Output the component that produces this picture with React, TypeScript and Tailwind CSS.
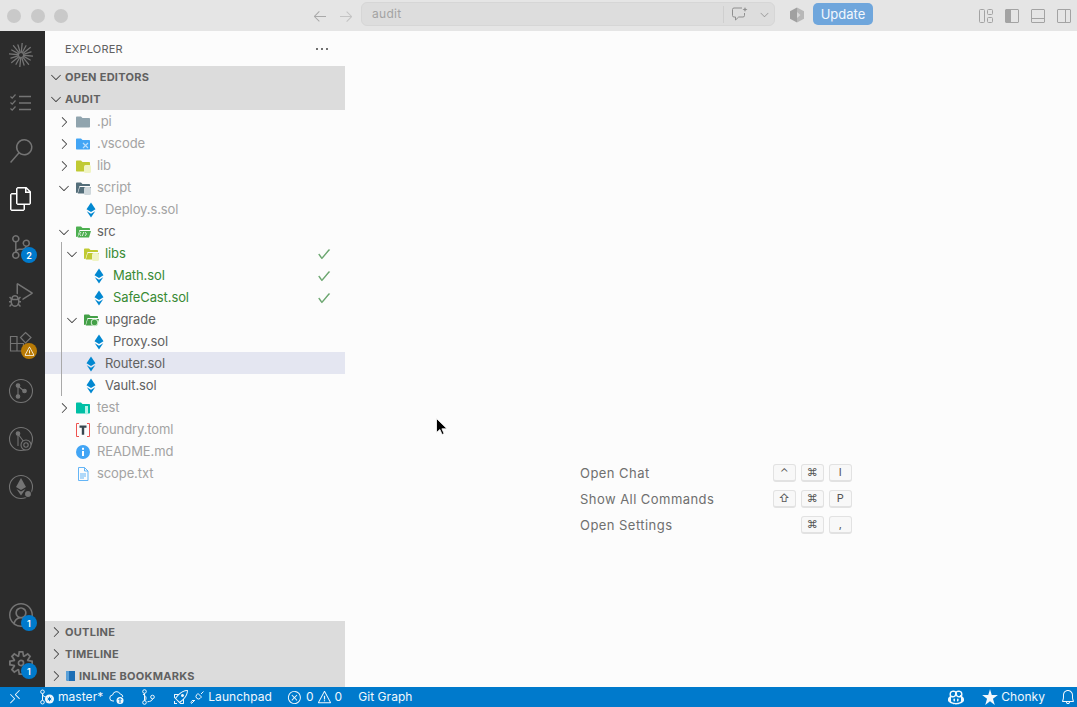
import React from "react";
import {
  VscArrowLeft, VscArrowRight, VscChevronDown, VscChevronRight, VscEllipsis, VscCheck,
  VscSearch, VscFiles, VscSourceControl, VscDebugAlt, VscAccount, VscSettingsGear,
  VscRemote, VscBell, VscError, VscWarning, VscRocket, VscCopilot, VscStarFull,
  VscLayoutSidebarLeft, VscLayoutPanelOff, VscLayoutSidebarRightOff,
} from "react-icons/vsc";

const Badge = ({ children, amber }: { children: React.ReactNode; amber?: boolean }) => (
  <span className={`absolute left-[21px] top-[24px] flex h-4 w-4 items-center justify-center rounded-full text-[9px] font-semibold leading-none text-white ${amber ? "bg-[#b87a06]" : "bg-[#007acc]"}`}>
    {children}
  </span>
);

const RingIcon = ({ children }: { children?: React.ReactNode }) => (
  <svg width="26" height="26" viewBox="0 0 26 26" fill="none" stroke="currentColor" strokeWidth="1.1">
    <circle cx="13" cy="13" r="11.5" />
    {children}
  </svg>
);

const Star = () => (
  <svg width="24" height="24" viewBox="0 0 24 24" stroke="currentColor" strokeWidth="1.3" strokeLinecap="round">
    {Array.from({ length: 16 }).map((_, i) => {
      const a = (i * Math.PI) / 8 + 0.1;
      const r = i % 2 ? 10.5 : 12;
      return <line key={i} x1={12 + 2.5 * Math.cos(a)} y1={12 + 2.5 * Math.sin(a)} x2={12 + r * Math.cos(a)} y2={12 + r * Math.sin(a)} />;
    })}
  </svg>
);

const Checklist = () => (
  <svg width="24" height="24" viewBox="0 0 24 24" fill="none" stroke="currentColor" strokeWidth="1.2">
    <path d="M1.5 5.5l1.7 1.7L6.5 3.5M1.5 11.5l1.7 1.7 3.3-3.7M1.5 17.5l1.7 1.7 3.3-3.7" />
    <path d="M10 5.5h12M10 12h12M10 18.5h12" strokeWidth="1.5" />
  </svg>
);

const Extensions = () => (
  <svg width="24" height="24" viewBox="0 0 24 24" fill="none" stroke="currentColor" strokeWidth="1.2">
    <path d="M1.5 5.5h6.5v7H1.5zM8 12.5h6.5v7.5H8zM1.5 12.5H8V20H1.5zM8 5.5v7" />
    <path d="M16.5 1.5l5.5 5-5.5 5.5L11.5 6.5z" />
  </svg>
);

const activityTop: [React.ReactNode, React.ReactNode?, boolean?, boolean?][] = [
  [<Star />],
  [<Checklist />],
  [<VscSearch size={24} />],
  [<VscFiles size={24} />, undefined, false, true],
  [<VscSourceControl size={24} />, "2"],
  [<VscDebugAlt size={24} />],
  [<Extensions />, <VscWarning size={11} />, true],
  [
    <RingIcon>
      <circle cx="10" cy="7.5" r="1.8" fill="currentColor" />
      <circle cx="10" cy="18.5" r="1.8" fill="currentColor" />
      <circle cx="16.5" cy="13" r="1.8" fill="currentColor" />
      <path d="M10 8v10M10 8l6 5" />
    </RingIcon>,
  ],
  [
    <RingIcon>
      <circle cx="10" cy="7.5" r="1.8" fill="currentColor" />
      <path d="M10 8v12M10 8l6 8" />
      <circle cx="18" cy="19" r="5" fill="#2c2c2c" />
      <circle cx="18" cy="19" r="2.2" />
    </RingIcon>,
  ],
  [
    <RingIcon>
      <path d="M13 4l5 9-5 3-5-3z" fill="currentColor" stroke="none" />
      <path d="M8.5 15l4.5 2.6 4.5-2.6-4.5 6.5z" fill="currentColor" stroke="none" />
      <circle cx="20" cy="20" r="3.5" fill="currentColor" stroke="#2c2c2c" />
    </RingIcon>,
  ],
];

const ActivityItem = ({ icon, badge, amber, active }: { icon: React.ReactNode; badge?: React.ReactNode; amber?: boolean; active?: boolean }) => (
  <div className={`relative flex h-12 w-[45px] items-center justify-center pr-[3px] ${active ? "text-white" : "text-[#747474]"}`}>
    {icon}
    {badge ? <Badge amber={amber}>{badge}</Badge> : null}
  </div>
);

const FOLDER = "M1 3.5C1 3 1.4 2.5 2 2.5h4l1.5 1.5H14c.6 0 1 .4 1 1v7.5c0 .6-.4 1-1 1H2c-.6 0-1-.4-1-1z";
const OPEN = "M1 3.5C1 3 1.4 2.5 2 2.5h4l1.5 1.5H14c.6 0 1 .4 1 1v1H4.5L2.5 13H2c-.6 0-1-.4-1-1z M4.8 7H16l-2 6.5H2.8z";

const Folder = ({ color, open, mark, markColor }: { color: string; open?: boolean; mark?: React.ReactNode; markColor?: string }) => (
  <svg width="16" height="16" viewBox="0 0 16 16">
    <path d={open ? OPEN : FOLDER} fill={color} />
    {markColor ? <rect x="9" y="7" width="7" height="8" rx="1.5" fill={markColor} /> : null}
    {mark}
  </svg>
);

const Sol = () => (
  <svg width="16" height="16" viewBox="0 0 16 16" fill="#0288d1">
    <path d="M8 .5l4.5 6.8L8 10 3.5 7.3z" />
    <path d="M3.8 9.2L8 11.8l4.2-2.6L8 15.5z" />
  </svg>
);

type Row = { name: string; depth: 0 | 1 | 2; icon: React.ReactNode; arrow?: "open" | "closed"; tone?: "dim" | "green" | "normal"; check?: boolean; selected?: boolean };

const depthPad = ["pl-[11px]", "pl-[19px]", "pl-[27px]"];
const tones = { dim: "text-[#a3a3a3]", green: "text-[#388a34]", normal: "text-[#616161]" };

const RowView = ({ r }: { r: Row }) => (
  <div className={`flex h-[22px] items-center pr-[14px] pt-[2px] text-[13px] tracking-[-0.1px] ${depthPad[r.depth]} ${r.selected ? "bg-[#e4e6f1]" : ""} ${tones[r.tone ?? "normal"]}`}>
    <span className="flex w-4 justify-center text-[#424242]">
      {r.arrow === "open" ? <VscChevronDown size={16} /> : r.arrow === "closed" ? <VscChevronRight size={16} /> : null}
    </span>
    <span className="ml-[3px] flex h-4 w-4 items-center justify-center">{r.icon}</span>
    <span className="ml-[6px] flex-1">{r.name}</span>
    {r.check ? <VscCheck size={14} className="text-[#5f9f64] [stroke-width:0.6]" /> : null}
  </div>
);

const top: Row[] = [
  { name: ".pi", depth: 0, arrow: "closed", tone: "dim", icon: <Folder color="#90a4ae" /> },
  { name: ".vscode", depth: 0, arrow: "closed", tone: "dim", icon: <Folder color="#42a5f5" mark={<path d="M8 7l5 5M13 7l-5 5" stroke="#bbdefb" strokeWidth="1.2" />} /> },
  { name: "lib", depth: 0, arrow: "closed", tone: "dim", icon: <Folder color="#c0ca33" markColor="#f0f4c3" /> },
  { name: "script", depth: 0, arrow: "open", tone: "dim", icon: <Folder color="#546e7a" open markColor="#cfd8dc" /> },
  { name: "Deploy.s.sol", depth: 1, tone: "dim", icon: <Sol /> },
  { name: "src", depth: 0, arrow: "open", icon: <Folder color="#4caf50" open mark={<path d="M6 8l-1.5 2L6 12M10 8l1.5 2L10 12M8.7 8l-1.4 4" stroke="#e8f5e9" fill="none" strokeWidth=".9" />} /> },
];
const inner: Row[] = [
  { name: "libs", depth: 1, arrow: "open", tone: "green", check: true, icon: <Folder color="#c0ca33" open markColor="#f0f4c3" /> },
  { name: "Math.sol", depth: 2, tone: "green", check: true, icon: <Sol /> },
  { name: "SafeCast.sol", depth: 2, tone: "green", check: true, icon: <Sol /> },
  { name: "upgrade", depth: 1, arrow: "open", icon: <Folder color="#43a047" open mark={<circle cx="11.5" cy="10.5" r="3.2" fill="none" stroke="#c8e6c9" strokeWidth="1.1" />} /> },
  { name: "Proxy.sol", depth: 2, icon: <Sol /> },
  { name: "Router.sol", depth: 1, selected: true, icon: <Sol /> },
  { name: "Vault.sol", depth: 1, icon: <Sol /> },
];
const bottom: Row[] = [
  { name: "test", depth: 0, arrow: "closed", tone: "dim", icon: <Folder color="#00bfa5" mark={<path d="M10 6h3v7a1.5 1.5 0 0 1-3 0z" fill="#b2f5e8" />} /> },
  {
    name: "foundry.toml", depth: 0, tone: "dim",
    icon: (
      <svg width="16" height="16" viewBox="0 0 16 16" fill="none">
        <path d="M4 1.5H1.5v13H4M12 1.5h2.5v13H12" stroke="#ef5350" />
        <path d="M4.5 3.5h7v2.2h-2.3v7H6.8v-7H4.5z" fill="#37474f" />
      </svg>
    ),
  },
  {
    name: "README.md", depth: 0, tone: "dim",
    icon: (
      <svg width="16" height="16" viewBox="0 0 16 16">
        <circle cx="8" cy="8" r="7" fill="#42a5f5" />
        <rect x="7" y="7" width="2" height="5" fill="#fff" />
        <rect x="7" y="3.8" width="2" height="2" fill="#fff" />
      </svg>
    ),
  },
  {
    name: "scope.txt", depth: 0, tone: "dim",
    icon: (
      <svg width="16" height="16" viewBox="0 0 16 16" fill="none" stroke="#64b5f6">
        <path d="M3.5 1.5h6l3.5 3.5v9.5h-9.5z" />
        <path d="M9.5 1.5V5H13" />
        <path d="M5 8h6M5 10h6M5 12h4" strokeWidth="1" />
      </svg>
    ),
  },
];

const Section = ({ title, open, book }: { title: string; open?: boolean; book?: boolean }) => (
  <div className="flex h-[22px] items-center bg-[#dcdcdc] pl-[1px] text-[11px] font-bold tracking-[0.28px] text-[#616161]">
    <span className="flex w-[19px] justify-center text-[#424242]">
      {open ? <VscChevronDown size={16} /> : <VscChevronRight size={16} />}
    </span>
    {book ? (
      <svg width="11" height="12" viewBox="0 0 11 12" className="mr-[3px]">
        <path d="M1 1h9v10H3a2 2 0 0 1-2-2z" fill="#1e6fb5" />
        <path d="M1 1h3v10H3a2 2 0 0 1-2-2z" fill="#5aa0d8" />
      </svg>
    ) : null}
    <span>{title}</span>
  </div>
);

const Key = ({ children }: { children: React.ReactNode }) => (
  <span className="flex h-[18px] w-[23px] items-center justify-center rounded-[3px] border border-b-2 border-[#e2e2e2] bg-[#f8f8f8] text-[11px] leading-none text-[#555]">
    {children}
  </span>
);

const Hint = ({ label, keys }: { label: string; keys: string[] }) => (
  <div className="flex h-[26px] w-[272px] items-center justify-between text-[13px] tracking-[0.45px] text-[#6f6f6f]">
    <span className="pt-[2px]">{label}</span>
    <span className="flex gap-[5px]">
      {keys.map((k, i) => (
        <Key key={i}>{k}</Key>
      ))}
    </span>
  </div>
);

const LayoutGrid = () => (
  <svg width="16" height="16" viewBox="0 0 16 16" fill="none" stroke="currentColor">
    <rect x="1.5" y="1.5" width="5" height="13" rx="1" />
    <rect x="9.5" y="1.5" width="5" height="5" rx="1" />
    <rect x="9.5" y="9.5" width="5" height="5" rx="1" />
  </svg>
);

export default function App() {
  return (
    <div className="relative flex h-[707px] w-[1077px] flex-col overflow-hidden bg-[#fcfcfc] font-['Inter','Liberation_Sans',sans-serif]">
      {/* title bar */}
      <header className="flex h-[31px] shrink-0 items-center bg-[#e5e5e5]">
        <div className="ml-[7px] flex w-[301px] gap-[9.5px]">
          <span className="h-3.5 w-3.5 rounded-full bg-[#c9c9c9]" />
          <span className="h-3.5 w-3.5 rounded-full bg-[#c9c9c9]" />
          <span className="h-3.5 w-3.5 rounded-full bg-[#c9c9c9]" />
        </div>
        <div className="ml-[4px] flex w-[49px] gap-[10px] text-[#a9a9a9]">
          <VscArrowLeft size={16} />
          <VscArrowRight size={16} className="text-[#c4c4c4]" />
        </div>
        <div className="mb-[3px] flex h-6 w-[414px] items-center rounded-md border border-[#d6d6d6] bg-[#dddddd] pl-[10px] text-xs tracking-[0.3px] text-[#a3a3a3]">
          <span className="flex-1">audit</span>
          <span className="h-[17px] w-px bg-[#cfcfcf]" />
          <svg width="18" height="16" viewBox="0 0 18 16" fill="none" stroke="#8f8f8f" className="ml-[7px]">
            <path d="M11 2H3a1.5 1.5 0 0 0-1.5 1.5v6A1.5 1.5 0 0 0 3 11h1.5v3l3.2-3H12a1.5 1.5 0 0 0 1.5-1.5V7" />
            <path d="M14 1l.7 1.8 1.8.7-1.8.7L14 6l-.7-1.8-1.8-.7 1.8-.7z" fill="#8f8f8f" stroke="none" />
          </svg>
          <VscChevronDown size={13} className="ml-[9px] mr-[3px] text-[#9a9a9a]" />
        </div>
        <svg width="16" height="16" viewBox="0 0 16 16" className="mb-[1px] ml-[14px]">
          <path d="M8 .5l7 3.8v7.4L8 15.5z" fill="#b8b8b8" />
          <path d="M8 .5L1 4.3v7.4l7 3.8z" fill="#a0a0a0" />
          <path d="M8 5l3.5 3L8 11z" fill="#d8d8d8" />
        </svg>
        <button className="ml-[8px] mb-[3px] h-[22px] w-[60px] rounded-[5px] bg-[#6fa6dc] text-[13px] leading-none text-[#f2f7fc]">Update</button>
        <div className="ml-[105px] flex gap-[10px] text-[#a3a3a3]">
          <LayoutGrid />
          <VscLayoutSidebarLeft size={16} />
          <VscLayoutPanelOff size={16} />
          <VscLayoutSidebarRightOff size={16} />
        </div>
      </header>

      <div className="flex min-h-0 flex-1">
        {/* activity bar */}
        <nav className="flex w-[45px] shrink-0 flex-col justify-between bg-[#2c2c2c]">
          <div>
            {activityTop.map(([icon, badge, amber, active], i) => (
              <ActivityItem key={i} icon={icon} badge={badge} amber={amber} active={active} />
            ))}
          </div>
          <div>
            <ActivityItem icon={<VscAccount size={24} />} badge="1" />
            <ActivityItem icon={<VscSettingsGear size={24} />} badge="1" />
          </div>
        </nav>

        {/* sidebar */}
        <aside className="flex w-[300px] shrink-0 flex-col">
          <div className="flex h-[35px] shrink-0 items-center justify-between pl-5 pr-[15px] text-[11px] tracking-[0.2px] text-[#616161]">
            <span className="pt-px">EXPLORER</span>
            <VscEllipsis size={16} className="text-[#424242]" />
          </div>
          <Section title="OPEN EDITORS" open />
          <Section title="AUDIT" open />
          <div className="flex-1">
            {top.map((r) => (
              <RowView key={r.name} r={r} />
            ))}
            <div className="relative">
              {inner.map((r) => (
                <RowView key={r.name} r={r} />
              ))}
              <span className="absolute left-[16px] top-0 h-full w-px bg-[#a9a9a9]" />
            </div>
            {bottom.map((r) => (
              <RowView key={r.name} r={r} />
            ))}
          </div>
          <Section title="OUTLINE" />
          <Section title="TIMELINE" />
          <Section title="INLINE BOOKMARKS" book />
        </aside>

        {/* editor */}
        <main className="flex min-w-0 flex-1 flex-col items-center pl-[10px] pt-[429px]">
          <Hint label="Open Chat" keys={["⌃", "⌘", "I"]} />
          <Hint label="Show All Commands" keys={["⇧", "⌘", "P"]} />
          <Hint label="Open Settings" keys={["⌘", ","]} />
        </main>
      </div>

      {/* status bar */}
      <footer className="flex h-5 shrink-0 items-center bg-[#007acc] text-xs tracking-[0.05px] text-[#f2f8fc]">
        <VscRemote size={16} className="ml-[7px]" />
        <svg width="16" height="16" viewBox="0 0 16 16" fill="none" stroke="currentColor" className="ml-[16px]">
          <circle cx="3.5" cy="2.8" r="1.8" />
          <circle cx="3.5" cy="13.2" r="1.8" />
          <path d="M3.5 4.6v6.8M3.5 5c0 2.5 3 3 4.5 3" />
          <circle cx="10.5" cy="10" r="4.5" fill="currentColor" stroke="none" />
          <path d="M10.5 7.8v4.4M8.6 8.9l3.8 2.2M12.4 8.9l-3.8 2.2" stroke="#007acc" />
        </svg>
        <span className="ml-[3px]">master*</span>
        <svg width="16" height="16" viewBox="0 0 16 16" fill="none" stroke="currentColor" className="ml-[6px]">
          <path d="M5 12H4a3 3 0 0 1-.4-6A4 4 0 0 1 11.2 5a3 3 0 0 1 2.6 3" />
          <circle cx="11" cy="11.5" r="3.5" fill="currentColor" stroke="none" />
          <path d="M11 14v-4.5M9.5 11L11 9.5l1.5 1.5" stroke="#007acc" />
        </svg>
        <svg width="15" height="16" viewBox="0 0 15 16" fill="none" stroke="currentColor" className="ml-[16px]">
          <circle cx="3.5" cy="2.5" r="1.8" />
          <circle cx="3.5" cy="13.5" r="1.8" />
          <circle cx="11.5" cy="8" r="1.8" />
          <path d="M3.5 4.3v7.4M2 5c2 3 3 1 3 4s-1 2-2 2.5M11.5 9.8c0 2-2 2.5-5 3" />
        </svg>
        <VscRocket size={16} className="ml-[17px]" />
        <svg width="15" height="15" viewBox="0 0 15 15" fill="none" stroke="currentColor" className="ml-[1px]">
          <path d="M8 3.5l3.5 3.5-1.5 1.5a2.5 2.5 0 0 1-3.5-3.5zM11 4l2.5-2.5M5 10l-1 1" />
          <path d="M1.5 13.5L4 11l-1-1-1 1a1.5 1.5 0 0 0-.5 2.5z" />
        </svg>
        <span className="ml-[3px]">Launchpad</span>
        <VscError size={15} className="ml-[15px]" />
        <span className="ml-[4px]">0</span>
        <VscWarning size={15} className="ml-[3px]" />
        <span className="ml-[3px]">0</span>
        <span className="ml-[16px]">Git Graph</span>
        <VscCopilot size={16} className="ml-auto" />
        <VscStarFull size={18} className="ml-[17px]" />
        <span className="ml-[2px]">Chonky</span>
        <VscBell size={16} className="ml-[15px] mr-[1px]" />
      </footer>

      {/* pointer */}
      <svg width="12" height="18" viewBox="0 0 12 18" className="absolute left-[436px] top-[418px]">
        <path d="M.5.5v14l3.4-3 2.2 5 2-.9-2.2-4.8H11z" fill="#000" stroke="#fff" strokeWidth=".8" />
      </svg>
    </div>
  );
}
